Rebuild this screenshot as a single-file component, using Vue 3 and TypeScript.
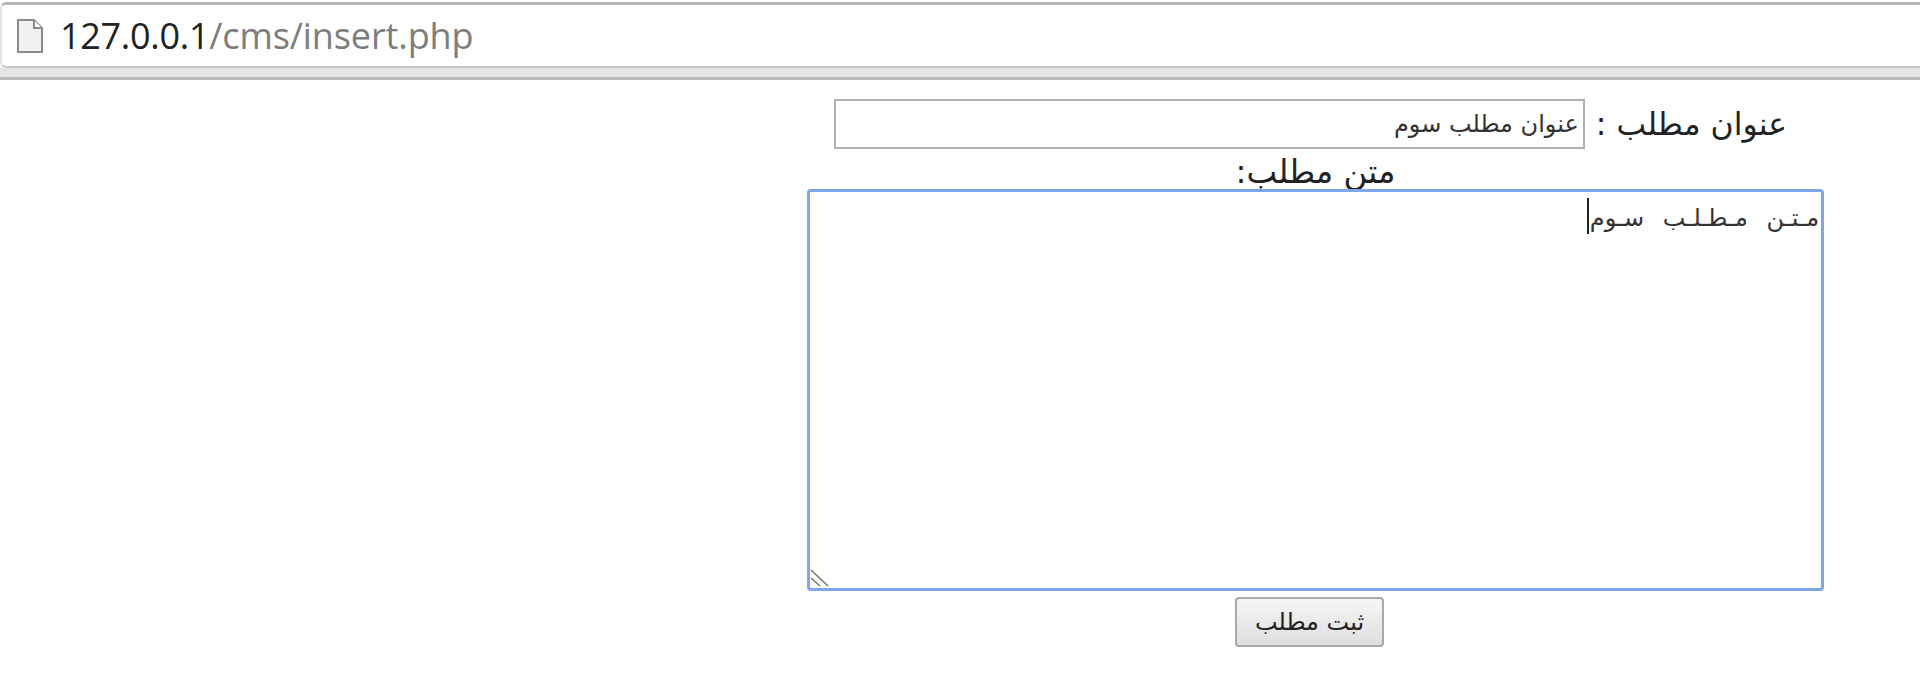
<script setup lang="ts">
const title = 'عنوان مطلب سوم'
const body = 'مـتـن مـطـلـب سـوم'
</script>

<template>
  <div class="page">
    <header class="toolbar">
      <div class="omnibox">
        <svg class="doc" width="28" height="36" viewBox="0 0 28 36" aria-hidden="true">
          <path d="M2 2H18L26 10V34H2Z" fill="#f1f1f1" stroke="#8a8a8a" stroke-width="2" />
          <path d="M18 2V10H26" fill="#fff" stroke="#8a8a8a" stroke-width="2" />
        </svg>
        <span class="url"><span class="host">127.0.0.1</span>/cms/insert.php</span>
      </div>
      <div class="strip"></div>
    </header>

    <form class="form" dir="rtl" @submit.prevent>
      <div class="title-row">
        <label class="label" for="title">عنوان مطلب :</label>
        <input id="title" class="title-input" type="text" :value="title" />
      </div>
      <label class="label body-label" for="body">متن مطلب:</label>
      <div class="area-wrap">
        <textarea id="body" class="area" :value="body"></textarea>
        <span class="caret"></span>
        <svg class="grip" width="20" height="20" viewBox="0 0 20 20" aria-hidden="true">
          <path d="M1 2L18 18M1 10L10 18" stroke="#777" stroke-width="1.6" fill="none" />
        </svg>
      </div>
      <button class="submit" type="submit">ثبت مطلب</button>
    </form>
  </div>
</template>

<style>
html, body { background: #fff; overflow: hidden; }
</style>

<style scoped>
.page { width: 1920px; height: 694px; background: #fff; overflow: hidden; }
.toolbar { height: 80px; display: flex; flex-direction: column; }
.omnibox {
  height: 66px; margin-top: 2px; display: flex; align-items: center; gap: 16px;
  padding-left: 14px; background: #fff;
  border-top: 3px solid #b4b4b4; border-left: 2px solid #e2e2e2;
  border-bottom: 2px solid #c8c8c8; border-radius: 6px 0 0 6px; box-sizing: border-box;
}
.doc { flex: none; }
.url { font-family: "Open Sans", sans-serif; font-size: 36px; color: #7d7d7d; letter-spacing: -0.1px; }
.host { color: #222; letter-spacing: -0.3px; }
.strip { flex: 1; background: #e6e6e6; border-bottom: 3px solid #b9b9b9; }
.form {
  width: 1017px; margin: 19px 0 0 807px; display: flex; flex-direction: column; align-items: center;
  font-family: "DejaVu Sans", "Noto Sans", sans-serif; color: #222;
}
.title-row { display: flex; align-items: center; gap: 11px; height: 50px; align-self: flex-start; padding-right: 37px; }
.label { font-size: 31.5px; line-height: 40px; }
.body-label { margin: 3px 0 0; height: 37px; font-size: 32.5px; }
.title-input {
  width: 751px; height: 50px; box-sizing: border-box; border: 2px solid #b0b0b0; background: #fff;
  padding: 0 4px; font-family: "DejaVu Sans", sans-serif; font-size: 24px; color: #333; outline: none;
}
.area-wrap { position: relative; width: 1017px; height: 402px; }
.area {
  display: block; width: 100%; height: 100%; box-sizing: border-box; resize: none; outline: none;
  border: 3px solid #7fa6e6; border-radius: 4px; padding: 12px 2px; background: #fff;
  font-family: "DejaVu Sans", sans-serif; font-size: 24px; word-spacing: 11px; color: #333;
}
.caret { position: absolute; left: 780px; top: 9px; width: 2px; height: 36px; background: #222; }
.grip { position: absolute; left: 3px; bottom: 3px; }
.submit {
  width: 149px; height: 50px; margin: 6px 0 0 0; margin-right: 12px; box-sizing: border-box;
  border: 2px solid #a9a9a9; border-radius: 4px;
  background: linear-gradient(#f6f6f6, #dedede);
  font-family: "DejaVu Sans", sans-serif; font-size: 24px; color: #222; padding: 0;
}
</style>
